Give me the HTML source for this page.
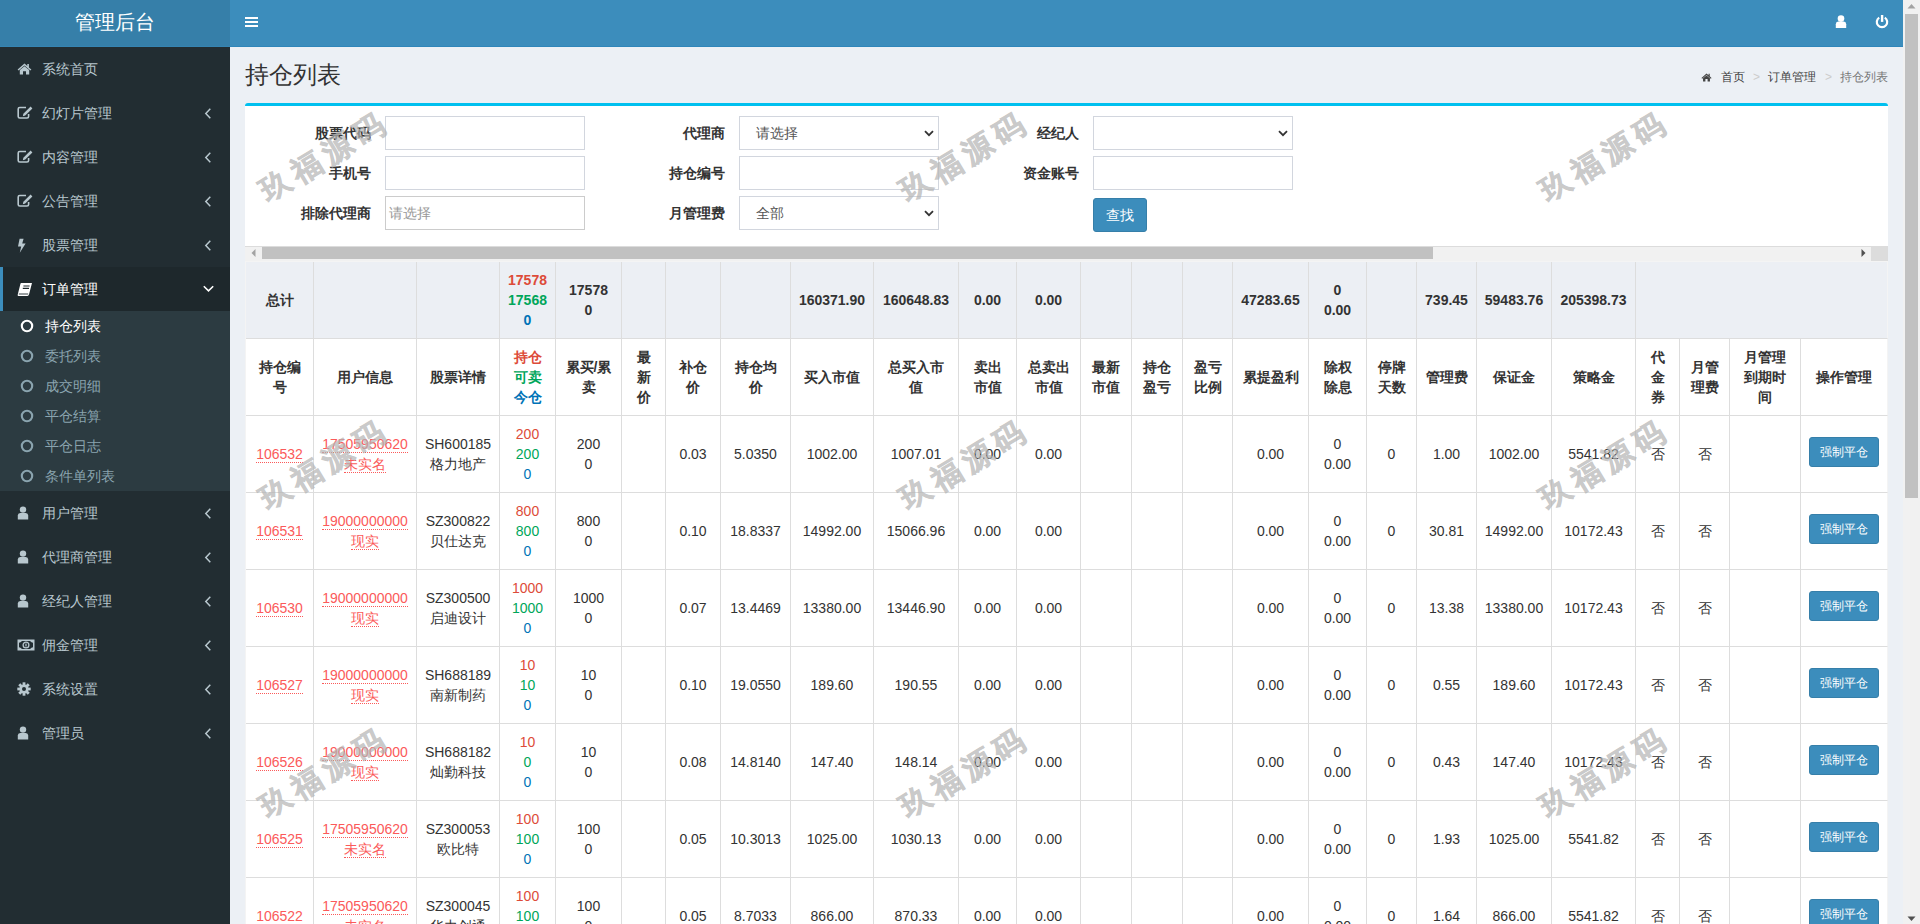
<!DOCTYPE html>
<html><head><meta charset="utf-8"><style>
*{box-sizing:border-box}
html,body{margin:0;padding:0;width:1920px;height:924px;overflow:hidden;background:#ecf0f5;font-family:"Liberation Sans",sans-serif;font-size:14px;color:#333;line-height:20px}
.abs{position:absolute}
#logo{left:0;top:0;width:230px;height:47px;background:#367fa9;color:#fff;font-size:20px;text-align:center;line-height:44px;border-bottom:1px solid #3584b2}
#nav{left:230px;top:0;width:1673px;height:47px;background:#3c8dbc;border-bottom:1px solid #2f86ba}
#side{left:0;top:47px;width:230px;height:877px;background:#222d32}
.mi{position:absolute;left:0;width:230px;height:44px;color:#b8c7ce;font-size:14px;line-height:20px}
.mi .t{position:absolute;left:42px;top:12px}
.mi svg{position:absolute}
.mi.act{background:#1e282c;color:#fff}
.mi.act:before{content:"";position:absolute;left:0;top:0;width:3px;height:44px;background:#3c8dbc}
.sub{position:absolute;left:0;top:311px;width:230px;height:180px;background:#2c3b41}
.si{position:absolute;left:0;width:230px;height:30px;color:#8aa4af}
.si .t{position:absolute;left:45px;top:5px}
.si svg{position:absolute;left:20px;top:8px}
#scroll{left:1903px;top:0;width:17px;height:924px;background:#f1f1f1}

#title{left:245px;top:60px;font-size:24px;line-height:30px;color:#333}
#bc{top:67px;font-size:12px;line-height:20px;color:#444}
#box{left:245px;top:103px;width:1643px;height:158px;background:#fff;border-top:3px solid #00c0ef;border-radius:3px 3px 0 0}
.lbl{position:absolute;font-weight:bold;text-align:right;width:120px;line-height:20px;color:#333}
.inp{position:absolute;width:200px;height:34px;border:1px solid #d2d6de;background:#fff}
.sel{position:absolute;width:200px;height:34px;border:1px solid #d2d6de;background:#fff;color:#555;line-height:20px}
.sel span{position:absolute;left:16px;top:6px}
.sel svg{position:absolute;left:184px;top:13px}
#btn{left:1093px;top:198px;width:54px;height:34px;background:#3c8dbc;border:1px solid #367fa9;border-radius:3px;color:#fff;text-align:center;line-height:32px}

#tw{left:245px;top:246px;width:1643px;height:678px;overflow:hidden;background:#fff}
#hsb{position:absolute;left:0;top:0;width:1643px;height:15px;background:#f1f1f1;border-top:1px solid #dcdcdc}
#hsb .th{position:absolute;left:17px;top:0;width:1171px;height:12px;background:#c1c1c1}
#hsb .corner{position:absolute;left:1626px;top:-1px;width:17px;height:16px;background:#dcdcdc}
table{position:absolute;left:0;top:15px;border-collapse:separate;border-spacing:0;table-layout:fixed;width:1643px;border-left:1px solid #f4f4f4;border-top:1px solid #f4f4f4}
td{box-sizing:border-box;border-right:1px solid #ddd;border-bottom:1px solid #ddd;padding:8px 0;text-align:center;vertical-align:middle;white-space:nowrap;line-height:20px;height:77px;color:#333}
tr.sum td{background:#eceff4;font-weight:bold}
tr.hd td{font-weight:bold}
.r{color:#dd4b39}.g{color:#00a65a}.b{color:#0073b7}
.lk{color:#fb5a5a;border-bottom:1px dotted #fb5a5a}
td:last-child{border-right-color:#f4f4f4}
.fb{display:inline-block;width:70px;height:30px;background:#3c8dbc;border:1px solid #367fa9;border-radius:3px;color:#fff;font-size:12px;line-height:28px;vertical-align:middle;position:relative;top:-2px}

.wm{position:absolute;width:240px;height:40px;margin-left:-120px;margin-top:-20px;text-align:center;font-size:30px;line-height:40px;font-weight:bold;letter-spacing:6px;text-indent:6px;color:#b4b4b4;opacity:0.7;-webkit-text-stroke:0.6px #b4b4b4;transform:rotate(-31deg);white-space:nowrap;pointer-events:none}
</style></head><body>
<div id="logo" class="abs">管理后台</div>
<div id="nav" class="abs">
 <svg class="abs" style="left:15px;top:17px" width="13" height="10"><rect x="0" y="0" width="13" height="2" fill="#fff"/><rect x="0" y="4" width="13" height="2" fill="#fff"/><rect x="0" y="8" width="13" height="2" fill="#fff"/></svg>
</div>
<div id="side" class="abs"></div>
<div class="mi" style="top:47px"><svg style="left:17px;top:16px" width="15" height="12" viewBox="0 0 15 12"><path d="M7.5 0.6 L0.6 6.6 L1.6 7.6 L7.5 2.6 L13.4 7.6 L14.4 6.6 L11.9 4.4 L11.9 1 L10.3 1 L10.3 3 Z" fill="#b8c7ce"/><path d="M2.8 7 L7.5 3.2 L12.2 7 L12.2 11.6 L9 11.6 L9 8.2 L6 8.2 L6 11.6 L2.8 11.6 Z" fill="#b8c7ce"/></svg><span class="t">系统首页</span></div>
<div class="mi" style="top:91px"><svg style="left:17px;top:15px" width="16" height="13" viewBox="0 0 16 13"><path d="M9 1.5 L2.8 1.5 Q1.2 1.5 1.2 3.1 L1.2 10.4 Q1.2 12 2.8 12 L10 12 Q11.6 12 11.6 10.4 L11.6 8" fill="none" stroke="#b8c7ce" stroke-width="1.6"/><path d="M13.6 0.6 L15.4 2.4 L8.2 9.6 L5.8 10.2 L6.4 7.8 Z" fill="#b8c7ce"/></svg><span class="t">幻灯片管理</span><svg style="left:204px;top:17px" width="8" height="11" viewBox="0 0 8 11"><path d="M6.3 0.8 L1.8 5.5 L6.3 10.2" fill="none" stroke="#b8c7ce" stroke-width="1.5"/></svg></div>
<div class="mi" style="top:135px"><svg style="left:17px;top:15px" width="16" height="13" viewBox="0 0 16 13"><path d="M9 1.5 L2.8 1.5 Q1.2 1.5 1.2 3.1 L1.2 10.4 Q1.2 12 2.8 12 L10 12 Q11.6 12 11.6 10.4 L11.6 8" fill="none" stroke="#b8c7ce" stroke-width="1.6"/><path d="M13.6 0.6 L15.4 2.4 L8.2 9.6 L5.8 10.2 L6.4 7.8 Z" fill="#b8c7ce"/></svg><span class="t">内容管理</span><svg style="left:204px;top:17px" width="8" height="11" viewBox="0 0 8 11"><path d="M6.3 0.8 L1.8 5.5 L6.3 10.2" fill="none" stroke="#b8c7ce" stroke-width="1.5"/></svg></div>
<div class="mi" style="top:179px"><svg style="left:17px;top:15px" width="16" height="13" viewBox="0 0 16 13"><path d="M9 1.5 L2.8 1.5 Q1.2 1.5 1.2 3.1 L1.2 10.4 Q1.2 12 2.8 12 L10 12 Q11.6 12 11.6 10.4 L11.6 8" fill="none" stroke="#b8c7ce" stroke-width="1.6"/><path d="M13.6 0.6 L15.4 2.4 L8.2 9.6 L5.8 10.2 L6.4 7.8 Z" fill="#b8c7ce"/></svg><span class="t">公告管理</span><svg style="left:204px;top:17px" width="8" height="11" viewBox="0 0 8 11"><path d="M6.3 0.8 L1.8 5.5 L6.3 10.2" fill="none" stroke="#b8c7ce" stroke-width="1.5"/></svg></div>
<div class="mi" style="top:223px"><svg style="left:17px;top:15px" width="10" height="15" viewBox="0 0 10 15"><path d="M2.6 0.8 L6.6 0.8 L5.2 5.6 L8.6 5.6 L2.8 14.8 L4.2 8.6 L1.0 8.6 Z" fill="#b8c7ce"/></svg><span class="t">股票管理</span><svg style="left:204px;top:17px" width="8" height="11" viewBox="0 0 8 11"><path d="M6.3 0.8 L1.8 5.5 L6.3 10.2" fill="none" stroke="#b8c7ce" stroke-width="1.5"/></svg></div>
<div class="mi act" style="top:267px"><svg style="left:17px;top:15px" width="16" height="15" viewBox="0 0 16 15"><path d="M4.2 1 L15 1 L12 12.6 Q11.6 14 10.4 14 L1.6 14 Q0.4 14 0.7 12.8 L3.4 2 Q3.6 1 4.2 1 Z" fill="#fff"/><path d="M6.4 4 L12.6 4 M5.8 6.4 L12 6.4" stroke="#1e282c" stroke-width="1.1"/><path d="M1.8 12 L11.2 12" stroke="#1e282c" stroke-width="0.9"/></svg><span class="t">订单管理</span><svg style="left:203px;top:18px" width="11" height="8" viewBox="0 0 11 8"><path d="M0.8 1.2 L5.5 5.8 L10.2 1.2" fill="none" stroke="#fff" stroke-width="1.6"/></svg></div>
<div class="mi" style="top:491px"><svg style="left:17px;top:15px" width="12" height="14" viewBox="0 0 12 14"><circle cx="6" cy="3.6" r="3.2" fill="#b8c7ce"/><path d="M0.8 13.4 L0.8 9.6 Q0.8 7.2 3.2 7 L8.8 7 Q11.2 7.2 11.2 9.6 L11.2 13.4 Z" fill="#b8c7ce"/></svg><span class="t">用户管理</span><svg style="left:204px;top:17px" width="8" height="11" viewBox="0 0 8 11"><path d="M6.3 0.8 L1.8 5.5 L6.3 10.2" fill="none" stroke="#b8c7ce" stroke-width="1.5"/></svg></div>
<div class="mi" style="top:535px"><svg style="left:17px;top:15px" width="12" height="14" viewBox="0 0 12 14"><circle cx="6" cy="3.6" r="3.2" fill="#b8c7ce"/><path d="M0.8 13.4 L0.8 9.6 Q0.8 7.2 3.2 7 L8.8 7 Q11.2 7.2 11.2 9.6 L11.2 13.4 Z" fill="#b8c7ce"/></svg><span class="t">代理商管理</span><svg style="left:204px;top:17px" width="8" height="11" viewBox="0 0 8 11"><path d="M6.3 0.8 L1.8 5.5 L6.3 10.2" fill="none" stroke="#b8c7ce" stroke-width="1.5"/></svg></div>
<div class="mi" style="top:579px"><svg style="left:17px;top:15px" width="12" height="14" viewBox="0 0 12 14"><circle cx="6" cy="3.6" r="3.2" fill="#b8c7ce"/><path d="M0.8 13.4 L0.8 9.6 Q0.8 7.2 3.2 7 L8.8 7 Q11.2 7.2 11.2 9.6 L11.2 13.4 Z" fill="#b8c7ce"/></svg><span class="t">经纪人管理</span><svg style="left:204px;top:17px" width="8" height="11" viewBox="0 0 8 11"><path d="M6.3 0.8 L1.8 5.5 L6.3 10.2" fill="none" stroke="#b8c7ce" stroke-width="1.5"/></svg></div>
<div class="mi" style="top:623px"><svg style="left:17px;top:16px" width="18" height="12" viewBox="0 0 18 12"><path d="M0.5 0.5 H17.5 V11.5 H0.5 Z M2 2 V10 H16 V2 Z" fill="#b8c7ce" fill-rule="evenodd"/><path d="M2 2 H5 Q3.5 3.5 2 3.8 Z M16 2 H13 Q14.5 3.5 16 3.8 Z M2 10 H5 Q3.5 8.5 2 8.2 Z M16 10 H13 Q14.5 8.5 16 8.2 Z" fill="#b8c7ce"/><circle cx="9" cy="6" r="2.9" fill="none" stroke="#b8c7ce" stroke-width="1.3"/><path d="M8.4 4.4 L9.6 4.4 L9.6 7.6 L8.4 7.6 Z" fill="#b8c7ce"/></svg><span class="t">佣金管理</span><svg style="left:204px;top:17px" width="8" height="11" viewBox="0 0 8 11"><path d="M6.3 0.8 L1.8 5.5 L6.3 10.2" fill="none" stroke="#b8c7ce" stroke-width="1.5"/></svg></div>
<div class="mi" style="top:667px"><svg style="left:17px;top:15px" width="14" height="14" viewBox="0 0 14 14"><g fill="#b8c7ce"><circle cx="7" cy="7" r="4.6"/><rect x="5.6" y="0.3" width="2.8" height="13.4"/><rect x="0.3" y="5.6" width="13.4" height="2.8"/><rect x="5.6" y="0.3" width="2.8" height="13.4" transform="rotate(45 7 7)"/><rect x="5.6" y="0.3" width="2.8" height="13.4" transform="rotate(-45 7 7)"/></g><circle cx="7" cy="7" r="2" fill="#222d32"/></svg><span class="t">系统设置</span><svg style="left:204px;top:17px" width="8" height="11" viewBox="0 0 8 11"><path d="M6.3 0.8 L1.8 5.5 L6.3 10.2" fill="none" stroke="#b8c7ce" stroke-width="1.5"/></svg></div>
<div class="mi" style="top:711px"><svg style="left:17px;top:15px" width="12" height="14" viewBox="0 0 12 14"><circle cx="6" cy="3.6" r="3.2" fill="#b8c7ce"/><path d="M0.8 13.4 L0.8 9.6 Q0.8 7.2 3.2 7 L8.8 7 Q11.2 7.2 11.2 9.6 L11.2 13.4 Z" fill="#b8c7ce"/></svg><span class="t">管理员</span><svg style="left:204px;top:17px" width="8" height="11" viewBox="0 0 8 11"><path d="M6.3 0.8 L1.8 5.5 L6.3 10.2" fill="none" stroke="#b8c7ce" stroke-width="1.5"/></svg></div>
<div class="sub">
<div class="si" style="top:0px;color:#fff"><svg width="14" height="14" viewBox="0 0 14 14"><circle cx="7" cy="7" r="5.2" fill="none" stroke="#fff" stroke-width="2.1"/></svg><span class="t">持仓列表</span></div>
<div class="si" style="top:30px;color:#8aa4af"><svg width="14" height="14" viewBox="0 0 14 14"><circle cx="7" cy="7" r="5.2" fill="none" stroke="#8aa4af" stroke-width="2.1"/></svg><span class="t">委托列表</span></div>
<div class="si" style="top:60px;color:#8aa4af"><svg width="14" height="14" viewBox="0 0 14 14"><circle cx="7" cy="7" r="5.2" fill="none" stroke="#8aa4af" stroke-width="2.1"/></svg><span class="t">成交明细</span></div>
<div class="si" style="top:90px;color:#8aa4af"><svg width="14" height="14" viewBox="0 0 14 14"><circle cx="7" cy="7" r="5.2" fill="none" stroke="#8aa4af" stroke-width="2.1"/></svg><span class="t">平仓结算</span></div>
<div class="si" style="top:120px;color:#8aa4af"><svg width="14" height="14" viewBox="0 0 14 14"><circle cx="7" cy="7" r="5.2" fill="none" stroke="#8aa4af" stroke-width="2.1"/></svg><span class="t">平仓日志</span></div>
<div class="si" style="top:150px;color:#8aa4af"><svg width="14" height="14" viewBox="0 0 14 14"><circle cx="7" cy="7" r="5.2" fill="none" stroke="#8aa4af" stroke-width="2.1"/></svg><span class="t">条件单列表</span></div>
</div>
<div id="title" class="abs">持仓列表</div>
<div id="bc" class="abs" style="left:1701px;width:190px"><svg class="abs" style="left:0;top:6px" width="11" height="9" viewBox="0 0 15 12"><path d="M7.5 0.6 L0.6 6.6 L1.6 7.6 L7.5 2.6 L13.4 7.6 L14.4 6.6 L11.9 4.4 L11.9 1 L10.3 1 L10.3 3 Z" fill="#444"/><path d="M2.8 7 L7.5 3.2 L12.2 7 L12.2 11.6 L9 11.6 L9 8.2 L6 8.2 L6 11.6 L2.8 11.6 Z" fill="#444"/></svg><span class="abs" style="left:20px">首页</span><span class="abs" style="left:52px;color:#ccc">&gt;</span><span class="abs" style="left:67px">订单管理</span><span class="abs" style="left:124px;color:#ccc">&gt;</span><span class="abs" style="left:139px;color:#777">持仓列表</span></div>
<div id="box" class="abs"></div>
<div class="lbl" style="left:251px;top:123px">股票代码</div>
<div class="lbl" style="left:251px;top:163px">手机号</div>
<div class="lbl" style="left:251px;top:203px">排除代理商</div>
<div class="lbl" style="left:605px;top:123px">代理商</div>
<div class="lbl" style="left:605px;top:163px">持仓编号</div>
<div class="lbl" style="left:605px;top:203px">月管理费</div>
<div class="lbl" style="left:959px;top:123px">经纪人</div>
<div class="lbl" style="left:959px;top:163px">资金账号</div>
<div class="inp" style="left:385px;top:116px"></div>
<div class="inp" style="left:385px;top:156px"></div>
<div class="inp" style="left:385px;top:196px;border-color:#ccc"><span class="abs" style="left:3px;top:6px;color:#999">请选择</span></div>
<div class="sel" style="left:739px;top:116px"><span>请选择</span><svg width="10" height="7" viewBox="0 0 10 7"><path d="M1 1.2 L5 5.2 L9 1.2" fill="none" stroke="#333" stroke-width="1.8"/></svg></div>
<div class="inp" style="left:739px;top:156px"></div>
<div class="sel" style="left:739px;top:196px"><span>全部</span><svg width="10" height="7" viewBox="0 0 10 7"><path d="M1 1.2 L5 5.2 L9 1.2" fill="none" stroke="#333" stroke-width="1.8"/></svg></div>
<div class="sel" style="left:1093px;top:116px"><svg width="10" height="7" viewBox="0 0 10 7"><path d="M1 1.2 L5 5.2 L9 1.2" fill="none" stroke="#333" stroke-width="1.8"/></svg></div>
<div class="inp" style="left:1093px;top:156px"></div>
<div id="btn" class="abs">查找</div>
<div id="tw" class="abs"><div id="hsb"><svg style="position:absolute;left:6px;top:2px" width="5" height="8" viewBox="0 0 5 8"><path d="M4.5 0 L0.5 4 L4.5 8 Z" fill="#a3a3a3"/></svg><div class="th"></div><svg style="position:absolute;left:1616px;top:2px" width="5" height="8" viewBox="0 0 5 8"><path d="M0.5 0 L4.5 4 L0.5 8 Z" fill="#505050"/></svg><div class="corner"></div></div>
<table><colgroup><col style="width:68px"><col style="width:103px"><col style="width:83px"><col style="width:56px"><col style="width:66px"><col style="width:44px"><col style="width:55px"><col style="width:70px"><col style="width:83px"><col style="width:85px"><col style="width:58px"><col style="width:64px"><col style="width:51px"><col style="width:51px"><col style="width:50px"><col style="width:76px"><col style="width:58px"><col style="width:50px"><col style="width:60px"><col style="width:75px"><col style="width:84px"><col style="width:44px"><col style="width:50px"><col style="width:71px"><col style="width:87px"></colgroup>
<tr class="sum"><td>总计</td><td></td><td></td><td><span class="r">17578</span><br><span class="g">17568</span><br><span class="b">0</span></td><td>17578<br>0</td><td></td><td></td><td></td><td>160371.90</td><td>160648.83</td><td>0.00</td><td>0.00</td><td></td><td></td><td></td><td>47283.65</td><td>0<br>0.00</td><td></td><td>739.45</td><td>59483.76</td><td>205398.73</td><td colspan="4"></td></tr>
<tr class="hd"><td>持仓编<br>号</td><td>用户信息</td><td>股票详情</td><td><span class="r">持仓</span><br><span class="g">可卖</span><br><span class="b">今仓</span></td><td>累买/累<br>卖</td><td>最<br>新<br>价</td><td>补仓<br>价</td><td>持仓均<br>价</td><td>买入市值</td><td>总买入市<br>值</td><td>卖出<br>市值</td><td>总卖出<br>市值</td><td>最新<br>市值</td><td>持仓<br>盈亏</td><td>盈亏<br>比例</td><td>累提盈利</td><td>除权<br>除息</td><td>停牌<br>天数</td><td>管理费</td><td>保证金</td><td>策略金</td><td>代<br>金<br>券</td><td>月管<br>理费</td><td>月管理<br>到期时<br>间</td><td>操作管理</td></tr>
<tr><td><span class="lk">106532</span></td><td><span class="lk">17505950620</span><br><span class="lk">未实名</span></td><td>SH600185<br>格力地产</td><td><span class="r">200</span><br><span class="g">200</span><br><span class="b">0</span></td><td>200<br>0</td><td></td><td>0.03</td><td>5.0350</td><td>1002.00</td><td>1007.01</td><td>0.00</td><td>0.00</td><td></td><td></td><td></td><td>0.00</td><td>0<br>0.00</td><td>0</td><td>1.00</td><td>1002.00</td><td>5541.82</td><td>否</td><td>否</td><td></td><td><span class="fb">强制平仓</span></td></tr>
<tr><td><span class="lk">106531</span></td><td><span class="lk">19000000000</span><br><span class="lk">现实</span></td><td>SZ300822<br>贝仕达克</td><td><span class="r">800</span><br><span class="g">800</span><br><span class="b">0</span></td><td>800<br>0</td><td></td><td>0.10</td><td>18.8337</td><td>14992.00</td><td>15066.96</td><td>0.00</td><td>0.00</td><td></td><td></td><td></td><td>0.00</td><td>0<br>0.00</td><td>0</td><td>30.81</td><td>14992.00</td><td>10172.43</td><td>否</td><td>否</td><td></td><td><span class="fb">强制平仓</span></td></tr>
<tr><td><span class="lk">106530</span></td><td><span class="lk">19000000000</span><br><span class="lk">现实</span></td><td>SZ300500<br>启迪设计</td><td><span class="r">1000</span><br><span class="g">1000</span><br><span class="b">0</span></td><td>1000<br>0</td><td></td><td>0.07</td><td>13.4469</td><td>13380.00</td><td>13446.90</td><td>0.00</td><td>0.00</td><td></td><td></td><td></td><td>0.00</td><td>0<br>0.00</td><td>0</td><td>13.38</td><td>13380.00</td><td>10172.43</td><td>否</td><td>否</td><td></td><td><span class="fb">强制平仓</span></td></tr>
<tr><td><span class="lk">106527</span></td><td><span class="lk">19000000000</span><br><span class="lk">现实</span></td><td>SH688189<br>南新制药</td><td><span class="r">10</span><br><span class="g">10</span><br><span class="b">0</span></td><td>10<br>0</td><td></td><td>0.10</td><td>19.0550</td><td>189.60</td><td>190.55</td><td>0.00</td><td>0.00</td><td></td><td></td><td></td><td>0.00</td><td>0<br>0.00</td><td>0</td><td>0.55</td><td>189.60</td><td>10172.43</td><td>否</td><td>否</td><td></td><td><span class="fb">强制平仓</span></td></tr>
<tr><td><span class="lk">106526</span></td><td><span class="lk">19000000000</span><br><span class="lk">现实</span></td><td>SH688182<br>灿勤科技</td><td><span class="r">10</span><br><span class="g">0</span><br><span class="b">0</span></td><td>10<br>0</td><td></td><td>0.08</td><td>14.8140</td><td>147.40</td><td>148.14</td><td>0.00</td><td>0.00</td><td></td><td></td><td></td><td>0.00</td><td>0<br>0.00</td><td>0</td><td>0.43</td><td>147.40</td><td>10172.43</td><td>否</td><td>否</td><td></td><td><span class="fb">强制平仓</span></td></tr>
<tr><td><span class="lk">106525</span></td><td><span class="lk">17505950620</span><br><span class="lk">未实名</span></td><td>SZ300053<br>欧比特</td><td><span class="r">100</span><br><span class="g">100</span><br><span class="b">0</span></td><td>100<br>0</td><td></td><td>0.05</td><td>10.3013</td><td>1025.00</td><td>1030.13</td><td>0.00</td><td>0.00</td><td></td><td></td><td></td><td>0.00</td><td>0<br>0.00</td><td>0</td><td>1.93</td><td>1025.00</td><td>5541.82</td><td>否</td><td>否</td><td></td><td><span class="fb">强制平仓</span></td></tr>
<tr><td><span class="lk">106522</span></td><td><span class="lk">17505950620</span><br><span class="lk">未实名</span></td><td>SZ300045<br>华力创通</td><td><span class="r">100</span><br><span class="g">100</span><br><span class="b">0</span></td><td>100<br>0</td><td></td><td>0.05</td><td>8.7033</td><td>866.00</td><td>870.33</td><td>0.00</td><td>0.00</td><td></td><td></td><td></td><td>0.00</td><td>0<br>0.00</td><td>0</td><td>1.64</td><td>866.00</td><td>5541.82</td><td>否</td><td>否</td><td></td><td><span class="fb">强制平仓</span></td></tr>
</table></div>
<div id="scroll" class="abs"></div>
<svg class="abs" style="left:1835px;top:15px" width="12" height="14" viewBox="0 0 12 14"><circle cx="6" cy="3.6" r="3.3" fill="#fff"/><path d="M0.8 13 L0.8 9.2 Q0.8 6.8 3.2 6.6 L8.8 6.6 Q11.2 6.8 11.2 9.2 L11.2 13 Z" fill="#fff"/></svg>
<svg class="abs" style="left:1875px;top:14px" width="14" height="15" viewBox="0 0 14 15"><path d="M4.2 3.6 A5.2 5.2 0 1 0 9.8 3.6" fill="none" stroke="#fff" stroke-width="2.2"/><rect x="5.9" y="1" width="2.4" height="6.9" fill="#fff"/></svg>
<div class="abs" style="left:1905px;top:14px;width:13px;height:484px;background:#c1c1c1"></div>
<svg class="abs" style="left:1907px;top:3px" width="9" height="6" viewBox="0 0 9 6"><path d="M0.5 5.5 L4.5 1 L8.5 5.5 Z" fill="#a3a3a3"/></svg>
<svg class="abs" style="left:1907px;top:916px" width="9" height="6" viewBox="0 0 9 6"><path d="M0.5 0.5 L4.5 5 L8.5 0.5 Z" fill="#505050"/></svg>
<div class="wm" style="left:321.8px;top:157.6px">玖福源码</div>
<div class="wm" style="left:321.8px;top:465.6px">玖福源码</div>
<div class="wm" style="left:321.8px;top:773.6px">玖福源码</div>
<div class="wm" style="left:961.8px;top:157.6px">玖福源码</div>
<div class="wm" style="left:961.8px;top:465.6px">玖福源码</div>
<div class="wm" style="left:961.8px;top:773.6px">玖福源码</div>
<div class="wm" style="left:1601.8px;top:157.6px">玖福源码</div>
<div class="wm" style="left:1601.8px;top:465.6px">玖福源码</div>
<div class="wm" style="left:1601.8px;top:773.6px">玖福源码</div>
</body></html>
